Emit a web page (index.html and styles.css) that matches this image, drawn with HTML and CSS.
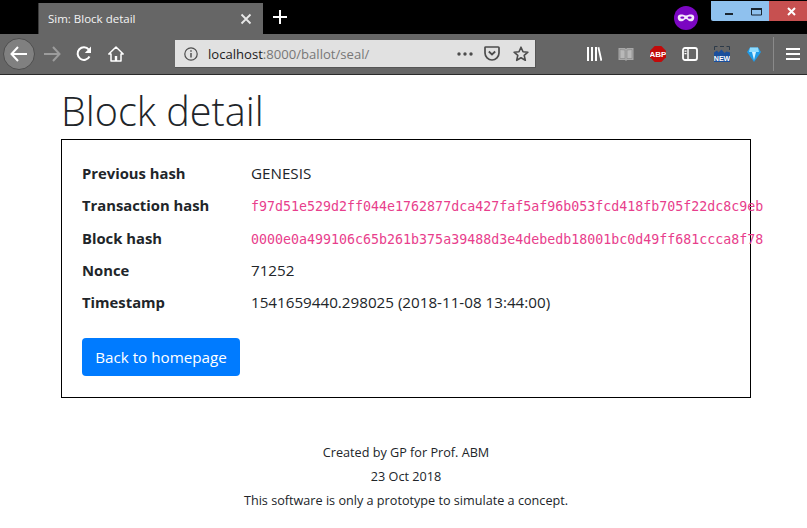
FILE: index.html
```html
<!DOCTYPE html>
<html lang="en">
<head>
  <meta charset="UTF-8">
  <meta name="viewport" content="width=device-width, initial-scale=1.0">
  <title>Sim: Block detail</title>
  <link rel="stylesheet" href="styles.css">
</head>
<body>
  <div class="titlebar">
    <div class="tab">
      <span class="tab-title">Sim: Block detail</span>
      <svg class="tab-close" width="12" height="12" viewBox="0 0 12 12"><path d="M1.5 1.5l9 9M10.5 1.5l-9 9" stroke="#e8e8e8" stroke-width="1.8" fill="none"/></svg>
    </div>
    <div class="new-tab">
      <svg width="14" height="14" viewBox="0 0 14 14"><path d="M7 0v14M0 7h14" stroke="#fff" stroke-width="2" fill="none"/></svg>
    </div>
    <div class="private-mask">
      <svg width="24" height="24" viewBox="0 0 24 24"><circle cx="12" cy="12" r="12" fill="#7b06c2"/><path d="M4 10c1-1.700 3.700-1.800 5.300-1.300 1 .3 1.900.8 2.700.8s1.700-.5 2.700-.8c1.600-.5 4.300-.4 5.300 1.300.6 1.400.2 4-1.400 4.900-1.800.9-3.800.2-4.800-.9-.5-.5-1.200-.9-1.800-.9s-1.300.4-1.800.9c-1 1.100-3 1.800-4.800.9C3.800 14 3.400 11.400 4 10z" fill="#f4e8fb"/><ellipse cx="8.300" cy="11.600" rx="2" ry="1.200" fill="#7b06c2"/><ellipse cx="15.700" cy="11.600" rx="2" ry="1.200" fill="#7b06c2"/></svg>
    </div>
    <div class="win-controls">
      <div class="win-blue">
        <svg width="58" height="20" viewBox="0 0 58 20"><path d="M14 12h8v2h-8z" fill="#1a2530"/><path d="M40.500 7.500h10v6.500h-10z" fill="none" stroke="#1a2530"/><path d="M40 7h11v2h-11z" fill="#1a2530"/></svg>
      </div>
      <div class="win-close">
        <svg width="38" height="20" viewBox="0 0 38 20"><path d="M19 7l7 7M26 7l-7 7" stroke="#fff" stroke-width="2" fill="none"/></svg>
      </div>
    </div>
  </div>

  <div class="toolbar">
    <div class="btn btn-back">
      <svg width="18" height="16" viewBox="0 0 18 16"><path d="M8 1L1.500 8 8 15M2 8h15" stroke="#fff" stroke-width="2" fill="none"/></svg>
    </div>
    <div class="btn btn-forward">
      <svg width="18" height="16" viewBox="0 0 18 16"><path d="M10 1l6.500 7-6.500 7M16 8H1" stroke="#9c9c9c" stroke-width="2" fill="none"/></svg>
    </div>
    <div class="btn">
      <svg width="16" height="16" viewBox="0 0 16 16"><path d="M13.500 10.500A6.300 6.300 0 1 1 12.800 3.600" stroke="#fff" stroke-width="2" fill="none"/><path d="M15 .5v6.500H8.800z" fill="#fff"/></svg>
    </div>
    <div class="btn">
      <svg width="16" height="16" viewBox="0 0 16 16"><path d="M8 1L.8 8h2.200v7h10V8h2.200z" fill="none" stroke="#fff" stroke-width="1.500" stroke-linejoin="round"/><path d="M6.800 10h2.400v5H6.800z" fill="#fff"/></svg>
    </div>

    <div class="urlbar">
      <svg class="info-icon" width="14" height="14" viewBox="0 0 14 14"><circle cx="7" cy="7" r="6.200" fill="none" stroke="#4c4c4c" stroke-width="1.200"/><path d="M6.300 6h1.400v4.500H6.300zM6.300 3.200h1.400v1.500H6.300z" fill="#4c4c4c"/></svg>
      <span class="url"><span class="url-host">localhost</span>:8000/ballot/seal/</span>
      <svg class="url-dots" width="16" height="4" viewBox="0 0 16 4"><circle cx="2" cy="2" r="1.700" fill="#4c4c4c"/><circle cx="8" cy="2" r="1.700" fill="#4c4c4c"/><circle cx="14" cy="2" r="1.700" fill="#4c4c4c"/></svg>
      <svg class="url-pocket" width="16" height="15" viewBox="0 0 16 15"><path d="M1.800 1h12.400c.5 0 .8.300.8.800v5.200c0 3.500-3.200 7-7 7s-7-3.500-7-7V1.800c0-.5.300-.8.800-.8z" fill="none" stroke="#4c4c4c" stroke-width="1.700"/><path d="M4.800 5.500L8 8.500l3.200-3" fill="none" stroke="#4c4c4c" stroke-width="1.800"/></svg>
      <svg class="url-star" width="16" height="16" viewBox="0 0 16 16"><path d="M8 1.200l2 4.500 4.900.5-3.700 3.200 1.100 4.900L8 11.800l-4.300 2.500 1.100-4.900L1.100 6.200 6 5.700z" fill="none" stroke="#4c4c4c" stroke-width="1.600" stroke-linejoin="round"/></svg>
    </div>

    <div class="toolbar-right">
      <div class="btn">
        <svg width="16" height="14" viewBox="0 0 16 14"><path d="M1 0h2v14H1zM5 0h2v14H5zM9 0h2v14H9zM11.500.5l1.800-.5 3 13.500-1.800.5z" fill="#fff"/></svg>
      </div>
      <div class="btn">
        <svg width="16" height="14" viewBox="0 0 16 14"><path d="M.5 1h6.500l1 1 1-1h6.500v12H9l-1 1-1-1H.5z" fill="#a8a8a8"/><path d="M2 2.500v9h5V3zM14 2.500v9H9V3z" fill="#b8b8b8" stroke="#8a8a8a" stroke-width=".7"/></svg>
      </div>
      <div class="btn">
        <svg width="16" height="16" viewBox="0 0 16 16"><path d="M4.700 0h6.600L16 4.700v6.600L11.300 16H4.700L0 11.300V4.700z" fill="#c20a0a"/><text x="8" y="11" class="abp-text">ABP</text></svg>
      </div>
      <div class="btn">
        <svg width="16" height="14" viewBox="0 0 16 14"><rect x="1" y="1" width="14" height="12" rx="2" fill="none" stroke="#fff" stroke-width="1.800"/><path d="M6 1v12" stroke="#fff" stroke-width="1.500"/><path d="M2.500 3.500h2v1.300h-2zM2.500 6h2v1.300h-2z" fill="#fff"/></svg>
      </div>
      <div class="btn">
        <svg width="16" height="16" viewBox="0 0 16 16"><path d="M.5 4V.5h3M6 .5h4M12.500.5h3V4" fill="none" stroke="#2d3a48"/><path d="M0 16V6.500l3-2 1.500 2 3-3 3 3.500 2-1.500 3.500 1V16z" fill="#1b4f9c"/><text x="8" y="14.800" class="new-text">NEW</text></svg>
      </div>
      <div class="btn">
        <svg width="14" height="15" viewBox="0 0 14 15"><path d="M3 .5h8L14 5 7 15 0 5z" fill="#1e9be8"/><path d="M3 .5h8L12 5H2z" fill="#8fdcff"/><path d="M5 5h4L7 13z" fill="#d5f3ff"/></svg>
      </div>
    </div>
    <div class="toolbar-sep"></div>
    <div class="btn btn-menu">
      <svg width="14" height="12" viewBox="0 0 14 12"><path d="M0 0h14v2H0zM0 5h14v2H0zM0 10h14v2H0z" fill="#fff"/></svg>
    </div>
  </div>

  <div class="page">
    <h1>Block detail</h1>
    <div class="block-card">
      <div class="detail-row">
        <div class="detail-label">Previous hash</div>
        <div class="detail-value">GENESIS</div>
      </div>
      <div class="detail-row">
        <div class="detail-label">Transaction hash</div>
        <div class="detail-value"><code>f97d51e529d2ff044e1762877dca427faf5af96b053fcd418fb705f22dc8c9eb</code></div>
      </div>
      <div class="detail-row">
        <div class="detail-label">Block hash</div>
        <div class="detail-value"><code>0000e0a499106c65b261b375a39488d3e4debedb18001bc0d49ff681ccca8f78</code></div>
      </div>
      <div class="detail-row">
        <div class="detail-label">Nonce</div>
        <div class="detail-value">71252</div>
      </div>
      <div class="detail-row">
        <div class="detail-label">Timestamp</div>
        <div class="detail-value">1541659440.298025 (2018-11-08 13:44:00)</div>
      </div>
      <a class="home-btn" href="#">Back to homepage</a>
    </div>
    <div class="footer">
      <p>Created by GP for Prof. ABM</p>
      <p>23 Oct 2018</p>
      <p>This software is only a prototype to simulate a concept.</p>
    </div>
  </div>
</body>
</html>
```

FILE: styles.css
```css
* {
  box-sizing: border-box;
}
body {
  margin: 0;
  font-family: "Open Sans", "Noto Sans", sans-serif;
  background-color: #fff;
  color: #212529;
  overflow: hidden;
}

/* browser chrome */
.titlebar {
  display: flex;
  height: 34px;
  background-color: #000;
}
.tab {
  display: flex;
  align-items: center;
  justify-content: space-between;
  width: 225px;
  height: 31px;
  margin-top: 3px;
  margin-left: 38px;
  padding: 0 11px 0 9px;
  background-color: #666;
  border-left: 1px solid #3c3c3c;
}
.tab-title {
  color: #f4f4f4;
  font-size: 11.500px;
}
.new-tab {
  display: flex;
  align-items: center;
  width: 34px;
  padding-left: 10px;
}
.private-mask {
  display: flex;
  align-items: center;
  margin-left: auto;
  margin-right: 13px;
  margin-top: 1px;
}
.win-controls {
  display: flex;
  height: 20px;
  margin-top: 1px;
}
.win-blue {
  width: 58px;
  height: 20px;
  background-color: #8fc1ee;
  border-bottom-left-radius: 2px;
}
.win-close {
  width: 38px;
  height: 20px;
  background-color: #c75050;
}
.win-blue svg,
.win-close svg {
  display: block;
}
.toolbar {
  display: flex;
  align-items: center;
  height: 41px;
  padding-left: 3px;
  background-color: #666;
  border-bottom: 1px solid #2a2a2a;
}
.btn {
  display: flex;
  align-items: center;
  justify-content: center;
  width: 32px;
  height: 32px;
  flex-shrink: 0;
}
.btn-back {
  margin-right: 1px;
  background-color: #808080;
  border: 1px solid #4e4e4e;
  border-radius: 50%;
}
.urlbar {
  display: flex;
  align-items: center;
  width: 361px;
  height: 28px;
  margin-left: 43px;
  padding-left: 9px;
  background-color: #e1e1e1;
  border: 1px solid #555;
  border-width: 0 1px 1px 0;
}
.url {
  margin-left: 10px;
  color: #777;
  font-size: 13.100px;
  white-space: nowrap;
}
.url-host {
  color: #1c1c1c;
}
.url-dots {
  margin-left: auto;
}
.url-pocket {
  margin-left: 11px;
}
.url-star {
  margin-left: 13px;
  margin-right: 6px;
}
.toolbar-right {
  display: flex;
  margin-left: 42px;
}
.toolbar-sep {
  width: 1px;
  height: 34px;
  margin-left: 3px;
  margin-right: 5px;
  background-color: #8a8a8a;
}
.btn-menu {
  width: 28px;
}
.abp-text {
  font-family: "Liberation Sans", sans-serif;
  font-size: 8px;
  font-weight: bold;
  fill: #fff;
  text-anchor: middle;
}
.new-text {
  font-family: "Liberation Sans", sans-serif;
  font-size: 7px;
  font-weight: bold;
  fill: #fff;
  text-anchor: middle;
}

/* page content */
.page {
  margin-left: 61px;
  width: 690px;
}
h1 {
  margin: 0;
  padding-top: 10px;
  font-size: 39.600px;
  font-weight: 300;
  line-height: 52px;
}
.block-card {
  margin-top: 2px;
  height: 259px;
  padding: 17px 20px 0;
  border: 1px solid #000;
}
.detail-row {
  display: flex;
  align-items: center;
  height: 32.250px;
  white-space: nowrap;
}
.detail-label {
  width: 169px;
  flex-shrink: 0;
  font-size: 14.800px;
  font-weight: 700;
}
.detail-value {
  font-size: 15.200px;
}
code {
  color: #e83e8c;
  font-family: "DejaVu Sans Mono", monospace;
  font-size: 13.300px;
}
.home-btn {
  display: inline-block;
  margin-top: 20px;
  padding: 0 13px;
  height: 38px;
  width: 158px;
  line-height: 38px;
  color: #fff;
  background-color: #007bff;
  border-radius: 4px;
  font-size: 15.200px;
  text-align: center;
  text-decoration: none;
  white-space: nowrap;
}
.footer {
  margin-top: 42px;
  text-align: center;
  font-size: 12.650px;
}
.footer p {
  margin: 0;
  line-height: 24px;
}
```
